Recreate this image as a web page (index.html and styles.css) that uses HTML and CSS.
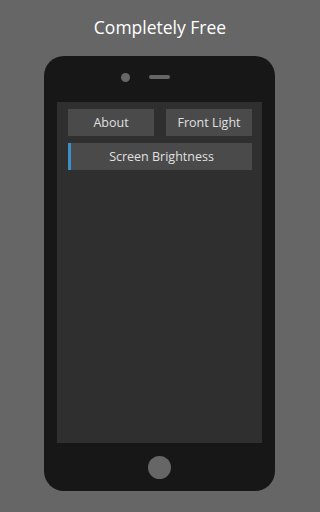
FILE: index.html
```html
<!DOCTYPE html>
<html lang="en">
<head>
    <meta charset="UTF-8">
    <meta name="viewport" content="width=device-width, initial-scale=1.0">
    <title>Completely Free</title>
    <link rel="stylesheet" href="styles.css">
</head>
<body>
    <h1 class="title">Completely Free</h1>

    <div class="phone">
        <div class="phone-top">
            <span class="camera"></span>
            <span class="speaker"></span>
        </div>

        <div class="screen">
            <div class="button-row">
                <button class="menu-button">About</button>
                <button class="menu-button">Front Light</button>
            </div>
            <button class="menu-button active">Screen Brightness</button>
        </div>

        <div class="phone-bottom">
            <span class="home-button"></span>
        </div>
    </div>
</body>
</html>
```

FILE: styles.css
```css
* {
    margin: 0;
    padding: 0;
    box-sizing: border-box;
    font-family: 'Open Sans', 'DejaVu Sans', sans-serif;
}

body {
    background-color: #666666;
    width: 320px;
    height: 512px;
    overflow: hidden;
}

.title {
    color: #ffffff;
    font-size: 17.5px;
    font-weight: normal;
    text-align: center;
    line-height: 24px;
    padding-top: 15px;
    height: 56px;
}

.phone {
    width: 231px;
    height: 435px;
    margin-left: 44px;
    background-color: #171717;
    border-radius: 20px;
    padding: 0 13px;
    display: flex;
    flex-direction: column;
}

.phone-top {
    height: 42px;
    display: flex;
    align-items: center;
    gap: 19px;
    padding-left: 64px;
    margin-bottom: 4px;
}

.camera {
    width: 9px;
    height: 9px;
    border-radius: 50%;
    background-color: #666666;
}

.speaker {
    width: 21px;
    height: 4px;
    border-radius: 2px;
    background-color: #666666;
}

.screen {
    height: 341px;
    background-color: #2f2f2f;
    padding: 7px 10px 0 11px;
    display: flex;
    flex-direction: column;
    gap: 7px;
}

.button-row {
    display: flex;
    gap: 12px;
}

.menu-button {
    flex: 1;
    height: 27px;
    background-color: #4a4a4a;
    color: #e0e0e0;
    border: none;
    font-size: 12.5px;
    text-align: center;
}

.menu-button.active {
    flex: none;
    border-left: 3px solid #3a8fc8;
}

.phone-bottom {
    flex: 1;
    display: flex;
    justify-content: center;
    align-items: center;
}

.home-button {
    width: 23px;
    height: 23px;
    border-radius: 50%;
    background-color: #666666;
}
```
